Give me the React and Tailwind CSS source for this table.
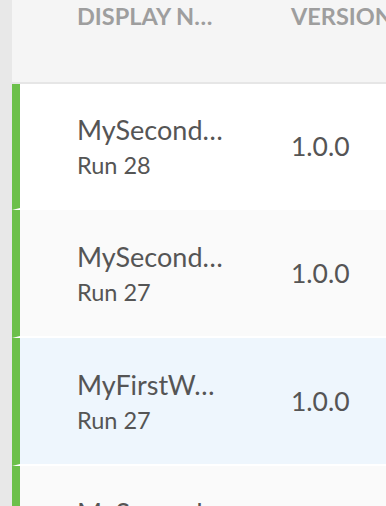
export default function App() {
  const rows = [
    { name: "MySecondWorkflow", run: "Run 28", version: "1.0.0", bg: "bg-white", h: "h-[126px]" },
    { name: "MySecondWorkflow", run: "Run 27", version: "1.0.0", bg: "bg-[#fafafa]", h: "h-[128px]" },
    { name: "MyFirstWorkflow", run: "Run 27", version: "1.0.0", bg: "bg-[#eef6fd]", h: "h-[128px]" },
    { name: "MySecondWorkflow", run: "Run 26", version: "1.0.0", bg: "bg-[#fafafa]", h: "h-[128px]" },
  ];
  return (
    <div className="flex w-[386px] h-[506px] overflow-hidden bg-[#e8e8e8]" style={{ fontFamily: "Lato, 'Noto Sans', sans-serif" }}>
      <div className="w-[12px] shrink-0 bg-[#e8e8e8]" />
      <div className="flex flex-col flex-1 min-w-0">
        <div className="h-[84px] shrink-0 bg-[#f5f5f5] border-b-2 border-[#e6e6e6] flex pt-[5px]">
          <div className="pl-[65px] w-[279px] shrink-0">
            <div className="w-[146px] truncate text-[23.5px] leading-none font-bold text-[#9e9e9e]">DISPLAY NAME</div>
          </div>
          <div className="text-[23.5px] leading-none font-bold text-[#9e9e9e] whitespace-nowrap">VERSION</div>
        </div>
        {rows.map((r, i) => (
          <div key={i} className={`${r.h} shrink-0 flex items-center border-l-8 border-l-[#6cc04a] border-b-2 border-b-white ${r.bg}`}>
            <div className="pl-[57px] w-[271px] shrink-0 flex flex-col text-[#555555]">
              <div className="w-[150px] truncate text-[27px] leading-[32px]">{r.name}</div>
              <div className="text-[23.5px] leading-[28px] mt-[5px]">{r.run}</div>
            </div>
            <div className="text-[26.5px] leading-none text-[#555555]">{r.version}</div>
          </div>
        ))}
      </div>
    </div>
  );
}
